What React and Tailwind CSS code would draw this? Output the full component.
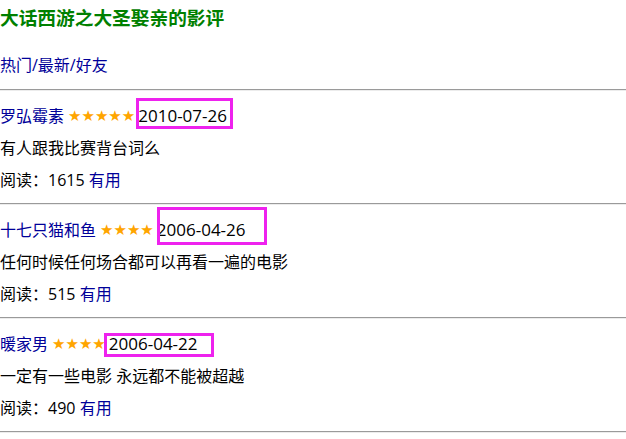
import React from 'react';

const reviews = [
  { name: '罗弘霉素', stars: 5, date: '2010-07-26', text: '有人跟我比赛背台词么', reads: 1615 },
  { name: '十七只猫和鱼', stars: 4, date: '2006-04-26', text: '任何时候任何场合都可以再看一遍的电影', reads: 515 },
  { name: '暖家男', stars: 4, date: '2006-04-22', text: '一定有一些电影 永远都不能被超越', reads: 490 },
];

// highlight boxes drawn over the date of each review
const marks = [
  'left-[136px] top-[98px] w-[97px] h-[31px]',
  'left-[157px] top-[207px] w-[110px] h-[38px]',
  'left-[104px] top-[333px] w-[110px] h-[24px]',
];

const Rule = () => <div className="h-[2px] border-t border-[#9a9a9a] border-b border-b-[#ececec]" />;

const App = () => {
  return (
    <div
      className="relative w-[626px] h-[439px] overflow-hidden bg-white text-black text-[16px]"
      style={{ fontFamily: '"Open Sans", "Noto Sans CJK SC", sans-serif' }}
    >
      <h3 className="mt-[6px] leading-[24px] text-[18.7px] font-bold text-[#008000]">大话西游之大圣娶亲的影评</h3>
      <div className="mt-[23px] leading-[24px] text-[#000099]">热门/最新/好友</div>
      <div className="mt-[12px]">
        <Rule />
        {reviews.map((r) => (
          <div key={r.name}>
            <div className="flex flex-col gap-[8px] pt-[13px] pb-[11px] leading-[24px]">
              <div className="h-[24px] flex items-center whitespace-nowrap leading-none">
                <span className="text-[#000099]">{r.name}</span>
                <span
                  className="ml-[4px] text-[#ffa500] text-[15px]"
                  style={{ fontFamily: '"DejaVu Sans", sans-serif' }}
                >
                  {'★'.repeat(r.stars)}
                </span>
                <span className="ml-[3px] -mt-[2px] text-[17px]">{r.date}</span>
              </div>
              <div>{r.text}</div>
              <div>
                阅读：{r.reads} <span className="text-[#000099]">有用</span>
              </div>
            </div>
            <Rule />
          </div>
        ))}
      </div>
      {marks.map((m) => (
        <div key={m} className={`absolute border-[3px] border-[#ee22ee] ${m}`} />
      ))}
    </div>
  );
};

export default App;
